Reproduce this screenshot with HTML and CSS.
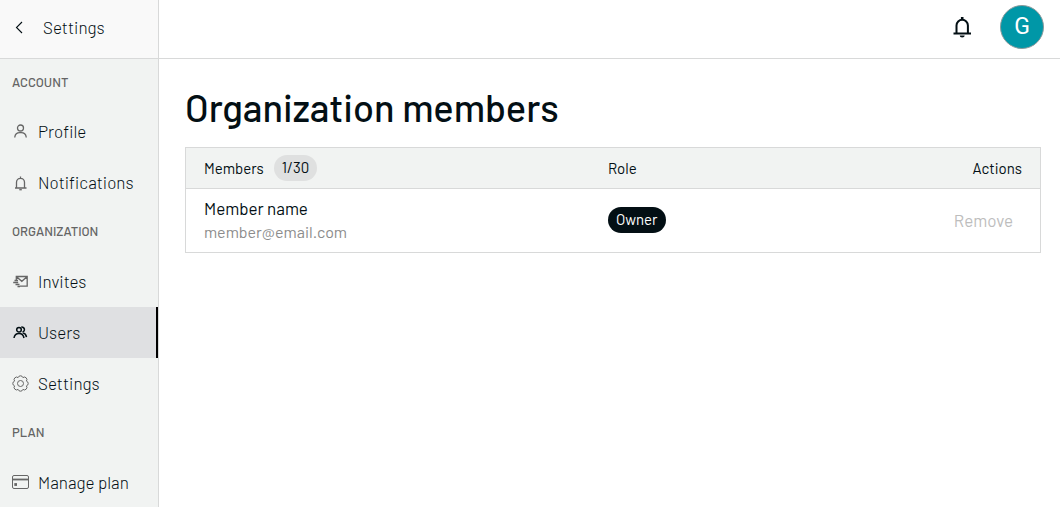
FILE: index.html
```html
<!DOCTYPE html>
<html lang="en">
<head>
<meta charset="utf-8">
<meta name="viewport" content="width=device-width, initial-scale=1">
<title>Organization members</title>
<link rel="stylesheet" href="styles.css">
</head>
<body>
<div class="app">
  <aside class="sidebar">
    <a class="back" href="#">
      <svg class="back-icon" viewBox="0 0 16 16" fill="none" stroke="currentColor" stroke-width="1.100"><path d="M11 2L5.500 7.500l5.500 5.500"/></svg>
      <span class="label">Settings</span>
    </a>
    <nav class="nav">
      <h2 class="nav-heading">Account</h2>
      <a class="nav-item" href="#">
        <svg class="icon" viewBox="0 0 18 18" fill="none" stroke="currentColor" stroke-width="1.300"><circle cx="8.500" cy="5" r="3"/><path d="M2.800 14.500v-.5a5 5 0 0 1 5-4.400h1.400a5 5 0 0 1 5 4.400v.5"/></svg>
        <span class="label">Profile</span>
      </a>
      <a class="nav-item" href="#">
        <svg class="icon" viewBox="0 0 18 18" fill="none" stroke="currentColor" stroke-width="1.300"><path d="M3 14h11.500M4.500 14V8.300a4 4 0 0 1 8 0V14M8.500 4.500V2.500"/><path d="M7.300 15.700h2.500"/></svg>
        <span class="label">Notifications</span>
      </a>
      <h2 class="nav-heading">Organization</h2>
      <a class="nav-item" href="#">
        <svg class="icon" viewBox="0 0 18 18" fill="none" stroke="currentColor" stroke-width="1.300"><path d="M4.300 7V3.500h10.900v9.700H8M4.500 3.800l5.300 4.500L15 3.800M2.500 7.500h3.500M1.200 9.500h5M3.500 11.500h4M5.500 13.500h2.500"/></svg>
        <span class="label">Invites</span>
      </a>
      <a class="nav-item nav-item-active" href="#" aria-current="page">
        <svg class="icon" viewBox="0 0 18 18" fill="none" stroke="currentColor" stroke-width="1.500"><circle cx="7" cy="5.700" r="2.300"/><path d="M2 14c.4-2.900 2.200-4.500 5-4.500s4.500 1.600 5 4.500M9.300 3.200a2.300 2.300 0 1 1 1.200 4.900M10.800 8.800c2 .5 3.400 2 3.700 4.400"/></svg>
        <span class="label">Users</span>
      </a>
      <a class="nav-item" href="#">
        <svg class="icon" viewBox="0 0 18 18" fill="none" stroke="currentColor" stroke-width="1"><circle cx="8.500" cy="8.500" r="3"/><path d="M14.400 10.900A2.500 2.500 0 0 1 10.900 14.400A2.500 2.500 0 0 1 6.100 14.400A2.500 2.500 0 0 1 2.600 10.900A2.500 2.500 0 0 1 2.600 6.100A2.500 2.500 0 0 1 6.100 2.600A2.500 2.500 0 0 1 10.900 2.600A2.500 2.500 0 0 1 14.400 6.100A2.500 2.500 0 0 1 14.400 10.900z"/></svg>
        <span class="label">Settings</span>
      </a>
      <h2 class="nav-heading">Plan</h2>
      <a class="nav-item" href="#">
        <svg class="icon" viewBox="0 0 18 18" fill="none" stroke="currentColor" stroke-width="1"><rect x=".5" y="1.500" width="16" height="13" rx="1.500"/><path stroke-width="1.800" d="M.5 5.500h16"/><path stroke-width="2.800" d="M2.300 10.500H5"/></svg>
        <span class="label">Manage plan</span>
      </a>
    </nav>
  </aside>
  <div class="page">
    <header class="topbar">
      <button class="bell" type="button" aria-label="Notifications">
        <svg class="bell-icon" viewBox="0 0 24 24" fill="none" stroke="currentColor" stroke-width="2"><path d="M3.500 18.500h17.500M6.500 18V10.500a5.700 5.700 0 0 1 11.400 0V18"/><path stroke-width="2.600" d="M12.200 5V2"/><path stroke="none" fill="currentColor" d="M9.700 20.500h5a2.500 2 0 0 1-5 0z"/></svg>
      </button>
      <button class="avatar" type="button">G</button>
    </header>
    <main class="content">
      <h1 class="title">Organization members</h1>
      <table class="members">
        <thead>
          <tr>
            <th class="col-member" scope="col"><span class="member-label">Members <span class="count">1/30</span></span></th>
            <th scope="col">Role</th>
            <th class="col-actions" scope="col">Actions</th>
          </tr>
        </thead>
        <tbody>
          <tr>
            <td>
              <div class="name">Member name</div>
              <div class="email">member@email.com</div>
            </td>
            <td><span class="role">Owner</span></td>
            <td class="col-actions"><button class="remove" type="button" disabled>Remove</button></td>
          </tr>
        </tbody>
      </table>
    </main>
  </div>
</div>
</body>
</html>
```
FILE: styles.css
```css
* {
  box-sizing: border-box;
}

body {
  margin: 0;
  background: #fff;
  color: #030f14;
  font-family: Barlow, Roboto, sans-serif;
  font-size: 17px;
  line-height: 24px;
}

button {
  padding: 0;
  border: 0;
  background: none;
  color: inherit;
  font: inherit;
}

a {
  color: inherit;
  text-decoration: none;
}

.app {
  display: flex;
  min-height: 100vh;
}

.sidebar {
  flex: none;
  width: 159px;
  border-right: 1px solid #d8d9d9;
  background: #f1f3f2;
}

.back {
  display: flex;
  align-items: center;
  gap: 16px;
  height: 59px;
  padding: 0 11px 2px;
  border-bottom: 1px solid #d8d9d9;
  background: #f9f9f9;
  font-weight: 300;
}

.back-icon {
  width: 16px;
  height: 16px;
}

.label {
  padding-bottom: 2px;
}

.nav-heading {
  height: 47px;
  margin: 0;
  padding: 12px 12px 0;
  color: #646464;
  font-size: 13px;
  font-weight: 500;
  line-height: 22px;
  text-transform: uppercase;
}

.nav-item + .nav-heading {
  height: 48px;
}

.nav-item {
  display: flex;
  align-items: center;
  gap: 8px;
  height: 51px;
  padding: 0 12px;
  font-weight: 300;
  white-space: nowrap;
}

.nav-item-active {
  border-right: 2px solid #000;
  background: #dfe0e2;
}

.icon {
  flex: none;
  width: 18px;
  height: 18px;
  color: #666;
}

.nav-item-active .icon {
  color: #030f14;
}

.page {
  flex: 1;
  min-width: 0;
}

.topbar {
  display: flex;
  align-items: center;
  justify-content: flex-end;
  gap: 26px;
  height: 59px;
  padding: 0 16px 4px;
  border-bottom: 1px solid #d8d9d9;
}

.bell,
.bell-icon {
  display: block;
  width: 24px;
  height: 24px;
}

.avatar {
  width: 44px;
  height: 44px;
  border: 1px solid #8a9a9c;
  border-radius: 50%;
  background: #0097a7;
  color: #fff;
  font-family: Roboto, sans-serif;
  font-size: 23px;
}

.content {
  padding: 24px 19px 24px 26px;
}

.title {
  margin: 0 0 16px;
  font-size: 38px;
  font-weight: 500;
  line-height: 48px;
}

.members {
  width: 100%;
  border: 1px solid #d8d9d9;
  border-collapse: collapse;
  table-layout: fixed;
}

.members th,
.members td {
  padding: 0 18px;
  text-align: left;
}

.members th {
  height: 41px;
  border-bottom: 1px solid #d8d9d9;
  background: #f1f3f2;
  font-size: 15px;
  font-weight: 400;
}

.members td {
  height: 64px;
  padding-bottom: 2px;
}

.members .col-member {
  width: 47.3%;
}

.members .col-actions {
  text-align: right;
}

.member-label {
  display: flex;
  align-items: center;
  gap: 10px;
}

.count,
.role {
  display: inline-block;
  padding: 0 8px 2px;
  border-radius: 13px;
  font-size: 15px;
  line-height: 24px;
}

.count {
  background: #dfe0e0;
}

.role {
  background: #030f14;
  color: #fff;
}

.email {
  color: #8c8c8c;
  font-size: 16px;
}

.remove {
  margin-right: 9px;
  color: #bdbdbd;
}
```
